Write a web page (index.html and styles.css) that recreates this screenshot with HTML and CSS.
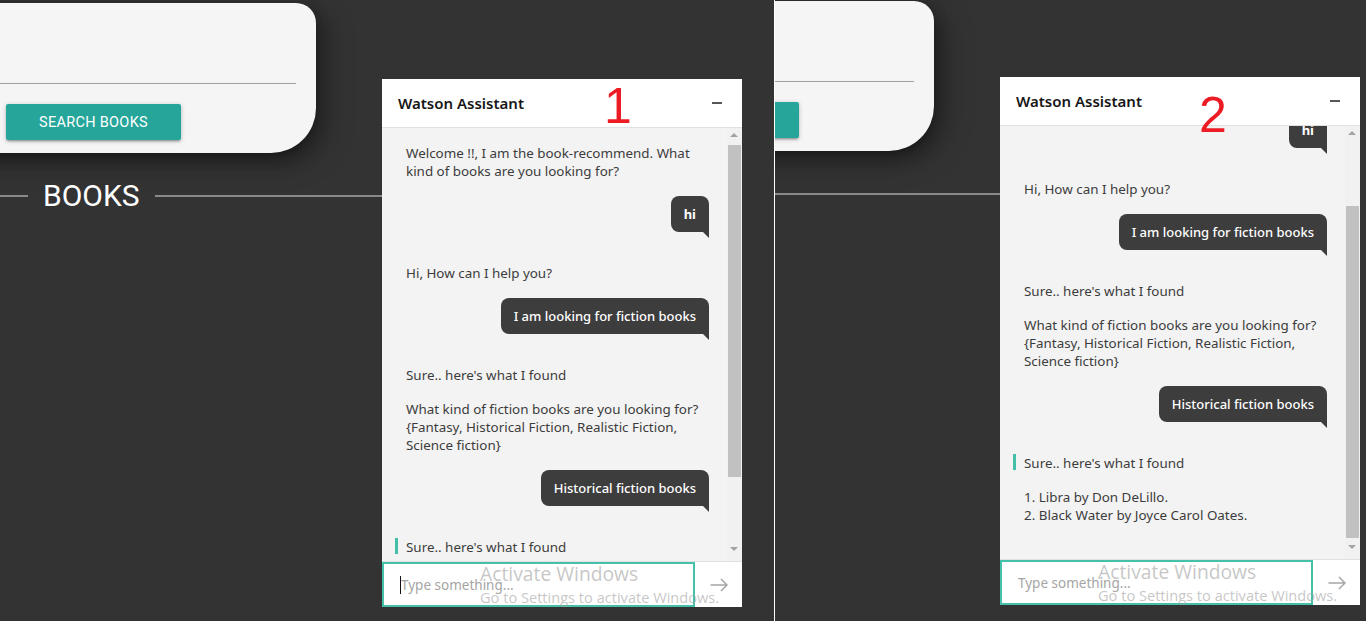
FILE: index.html
```html
<!DOCTYPE html>
<html lang="en">
<head>
<meta charset="utf-8">
<title>Book recommend - Watson Assistant</title>
<link rel="stylesheet" href="styles.css">
</head>
<body>
<div class="desk">
  <section class="screen s1">
    <div class="page">
      <div class="card">
        <div class="field"></div>
        <button class="btn">SEARCH BOOKS</button>
      </div>
      <div class="heading"><span class="rule lead"></span><h2>BOOKS</h2><span class="rule tail"></span></div>
    </div>
    <div class="chat">
      <div class="chat-head"><span class="title">Watson Assistant</span><span class="minus"></span></div>
      <div class="chat-body">
        <div class="msgs">
          <div class="msgs-inner">
            <div class="bot"><p>Welcome !!, I am the book-recommend. What kind of books are you looking for?</p></div>
            <div class="user bold">hi</div>
            <div class="bot"><p>Hi, How can I help you?</p></div>
            <div class="user">I am looking for fiction books</div>
            <div class="bot"><p>Sure.. here's what I found</p><p>What kind of fiction books are you looking for?<br>{Fantasy, Historical Fiction, Realistic Fiction, Science fiction}</p></div>
            <div class="user">Historical fiction books</div>
            <div class="bot latest"><p>Sure.. here's what I found</p><p>1. Libra by Don DeLillo.<br>2. Black Water by Joyce Carol Oates.</p></div>
          </div>
        </div>
        <div class="scroll"><span class="arrow up"></span><span class="thumb"></span><span class="arrow down"></span></div>
      </div>
      <div class="chat-input">
        <div class="input-box"><span class="caret"></span><span class="placeholder">Type something...</span></div>
        <div class="send"><svg width="18" height="14" viewBox="0 0 18 14"><path d="M0.5 7H17M11 1l6 6-6 6" fill="none" stroke="#a6a6a6" stroke-width="1.5"/></svg></div>
      </div>
    </div>
    <div class="mark">1</div>
    <div class="watermark"><div class="wm1">Activate Windows</div><div class="wm2">Go to Settings to activate Windows.</div></div>
  </section>
  <div class="divider"></div>
  <section class="screen s2">
    <div class="page">
      <div class="card">
        <div class="field"></div>
        <button class="btn">SEARCH BOOKS</button>
      </div>
      <div class="heading"><span class="rule lead"></span><h2>BOOKS</h2><span class="rule tail"></span></div>
    </div>
    <div class="chat">
      <div class="chat-head"><span class="title">Watson Assistant</span><span class="minus"></span></div>
      <div class="chat-body">
        <div class="msgs">
          <div class="msgs-inner">
            <div class="bot"><p>Welcome !!, I am the book-recommend. What kind of books are you looking for?</p></div>
            <div class="user bold">hi</div>
            <div class="bot"><p>Hi, How can I help you?</p></div>
            <div class="user">I am looking for fiction books</div>
            <div class="bot"><p>Sure.. here's what I found</p><p>What kind of fiction books are you looking for?<br>{Fantasy, Historical Fiction, Realistic Fiction, Science fiction}</p></div>
            <div class="user">Historical fiction books</div>
            <div class="bot latest"><p>Sure.. here's what I found</p><p>1. Libra by Don DeLillo.<br>2. Black Water by Joyce Carol Oates.</p></div>
          </div>
        </div>
        <div class="scroll"><span class="arrow up"></span><span class="thumb"></span><span class="arrow down"></span></div>
      </div>
      <div class="chat-input">
        <div class="input-box"><span class="placeholder">Type something...</span></div>
        <div class="send"><svg width="18" height="14" viewBox="0 0 18 14"><path d="M0.5 7H17M11 1l6 6-6 6" fill="none" stroke="#a6a6a6" stroke-width="1.5"/></svg></div>
      </div>
    </div>
    <div class="mark">2</div>
    <div class="watermark"><div class="wm1">Activate Windows</div><div class="wm2">Go to Settings to activate Windows.</div></div>
  </section>
</div>
</body>
</html>
```
FILE: styles.css
```css
* { box-sizing: border-box; }
html, body { margin: 0; padding: 0; }
body { background: #333; font-family: Roboto, "Liberation Sans", sans-serif; overflow: hidden; }
p { margin: 0; }

.desk { display: flex; width: 1366px; height: 621px; }
.screen { position: relative; overflow: hidden; height: 621px; background: #333; }
.s1 { width: 774px; flex: none; }
.divider { width: 1px; background: #fff; flex: none; }
.s2 { flex: 1; }

/* page content behind the chat */
.page { width: 804px; margin-left: -84px; padding-top: 3px; }
.s2 .page { margin-left: -241px; padding-top: 1px; }

.card {
  width: 400px; height: 150px; background: #f5f5f5;
  border-radius: 0 20px 45px 45px;
  box-shadow: 0 8px 17px 2px rgba(0,0,0,.14), 0 3px 14px 2px rgba(0,0,0,.12), 0 5px 5px -3px rgba(0,0,0,.2), 12px 10px 28px rgba(0,0,0,.25);
  display: flex; flex-direction: column; align-items: flex-start;
}
.field { width: 380px; height: 81px; border-bottom: 1px solid #a0a0a0; }
.btn {
  margin: 20px 0 0 90px; width: 175px; height: 36px; border: 0; border-radius: 2px;
  background: #26a69a; color: #fff; font-family: Roboto, sans-serif; font-size: 14.5px; font-weight: 400;
  letter-spacing: .3px; box-shadow: 0 2px 2px rgba(0,0,0,.14), 0 3px 1px -2px rgba(0,0,0,.12), 0 1px 5px rgba(0,0,0,.2);
  padding: 0;
}
.heading { display: flex; align-items: center; margin-top: 25px; height: 36px; }
.rule { height: 2px; background: #8a8a8a; }
.rule.lead { width: 112px; }
.rule.tail { flex: 1; }
.heading h2 { margin: 0 15px; font-family: Roboto, sans-serif; font-weight: 400; font-size: 30px; line-height: 36px; color: #fff; }

/* chat widget */
.chat { position: absolute; width: 360px; height: 528px; background: #fff; display: flex; flex-direction: column; }
.s1 .chat { left: 382px; top: 79px; }
.s2 .chat { left: 225px; top: 77px; }
.chat-head {
  height: 49px; flex: none; border-bottom: 1px solid #e0e0e0; display: flex; align-items: center; justify-content: space-between;
  padding: 0 20px 0 16px; background: #fff;
}
.title { font-family: "Noto Sans", sans-serif; font-weight: 600; font-size: 15px; color: #171717; }
.minus { width: 10px; height: 2px; background: #565656; }

.chat-body { height: 434px; flex: none; display: flex; background: #f3f3f3; border-bottom: 1px solid #e0e0e0; }
.msgs { flex: 1; overflow: hidden; position: relative; }
.msgs-inner { padding: 16px 18px 40px 24px; display: flex; flex-direction: column; }
.s2 .msgs-inner { margin-top: -82px; }

.bot { font-family: "Noto Sans", sans-serif; font-size: 13.4px; line-height: 18px; color: #3c3c3c; margin-top: 32px; position: relative; }
.bot:first-child { margin-top: 0; }
.bot p + p { margin-top: 16px; }
.bot.latest::before { content: ""; position: absolute; left: -11px; top: 0; width: 3px; height: 16px; background: #42bfa6; }

.user {
  align-self: flex-end; margin-top: 16px; position: relative;
  background: #3d3d3d; color: #fff; border-radius: 8px 8px 0 8px; padding: 9px 13px;
  font-family: "Noto Sans", sans-serif; font-size: 13px; line-height: 18px; font-weight: 500;
}
.user.bold { font-weight: 700; }
.user::after {
  content: ""; position: absolute; right: 0; bottom: -6px;
  border-top: 6px solid #3d3d3d; border-left: 6px solid transparent;
}

.scroll { width: 15px; flex: none; background: #f1f1f1; position: relative; }
.thumb { position: absolute; left: 1px; right: 1px; top: 17px; height: 332px; background: #c1c1c1; }
.s2 .thumb { top: 80px; }
.arrow { position: absolute; left: 3px; width: 0; height: 0; border-left: 4px solid transparent; border-right: 4px solid transparent; }
.arrow.up { top: 5px; border-bottom: 4px solid #a3a3a3; }
.arrow.down { bottom: 10px; border-top: 4px solid #a3a3a3; }

.chat-input { height: 45px; flex: none; display: flex; background: #fff; }
.input-box {
  width: 313px; border: 2px solid #45c1a9; padding-left: 16px; display: flex; align-items: center;
  font-family: "Noto Sans", sans-serif; font-size: 13.5px; color: #a5a5a5;
}
.caret { width: 1px; height: 18px; background: #111; }
.send { flex: 1; display: flex; align-items: center; justify-content: center; }

/* annotations */
.mark { position: absolute; font-family: "Liberation Sans", Arial, sans-serif; font-size: 50px; line-height: 50px; color: #ed1c24; }
.s1 .mark { left: 604px; top: 81px; }
.s2 .mark { left: 424px; top: 90px; }

.watermark { position: absolute; font-family: "Open Sans", "Noto Sans", sans-serif; color: rgba(160,160,160,.6); pointer-events: none; }
.s1 .watermark { left: 480px; top: 560px; }
.s2 .watermark { left: 323px; top: 558px; }
.wm1 { font-size: 19.3px; line-height: 27px; }
.wm2 { font-size: 14.6px; line-height: 20px; }
```
